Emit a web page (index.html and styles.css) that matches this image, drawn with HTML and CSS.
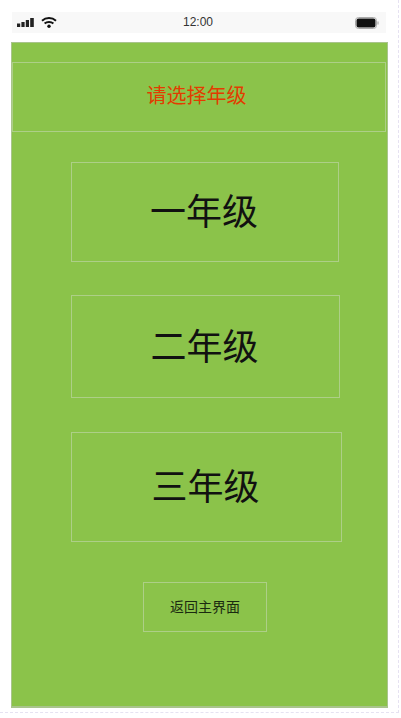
FILE: index.html
```html
<!DOCTYPE html>
<html lang="zh-CN">
<head>
    <meta charset="UTF-8">
    <meta name="viewport" content="width=device-width, initial-scale=1.0">
    <title>请选择年级</title>
    <link rel="stylesheet" href="styles.css">
</head>
<body>
    <div class="canvas">
        <div class="phone">
            <div class="status-bar">
                <div class="status-left">
                    <svg class="signal" width="18" height="10" viewBox="0 0 18 10">
                        <rect x="0" y="5.5" width="3.2" height="3.5" fill="#222"/>
                        <rect x="4.4" y="4" width="3.2" height="5" fill="#222"/>
                        <rect x="8.8" y="2" width="3.2" height="7" fill="#222"/>
                        <rect x="13.2" y="0" width="3.6" height="9" fill="#222"/>
                    </svg>
                    <svg class="wifi" width="16" height="11" viewBox="0 0 16 11">
                        <path d="M1 3.8C5 0.2 11 0.2 15 3.8" fill="none" stroke="#111" stroke-width="2"/>
                        <path d="M3.6 6.4C6 4.4 10 4.4 12.4 6.4" fill="none" stroke="#111" stroke-width="2"/>
                        <circle cx="8" cy="9.2" r="1.7" fill="#111"/>
                    </svg>
                </div>
                <div class="status-time">12:00</div>
                <svg class="battery" width="24" height="12" viewBox="0 0 24 12">
                    <rect x="0.5" y="0.5" width="21" height="11" rx="3" fill="#fff" stroke="#aaa"/>
                    <rect x="1.5" y="1.5" width="19" height="9" rx="2" fill="#111"/>
                    <rect x="22.5" y="4.5" width="1" height="3" fill="#999"/>
                </svg>
            </div>
            <div class="screen">
                <div class="header-box">请选择年级</div>
                <a class="grade-box grade-one">一年级</a>
                <a class="grade-box grade-two">二年级</a>
                <a class="grade-box grade-three">三年级</a>
                <a class="back-button">返回主界面</a>
            </div>
        </div>
    </div>
</body>
</html>
```

FILE: styles.css
```css
html, body {
    margin: 0;
    padding: 0;
    background-color: #ffffff;
    overflow: hidden;
}

body {
    font-family: "Liberation Sans", "Noto Sans CJK SC", sans-serif;
}

.canvas {
    width: 399px;
    height: 713px;
    padding: 12px 0 0 11px;
    box-sizing: border-box;
    border-right: 1px dashed #e6e2f2;
    border-bottom: 1px dashed #e6e2f2;
}

.phone {
    width: 377px;
    display: flex;
    flex-direction: column;
}

.status-bar {
    height: 21px;
    margin: 0 2px 9px 1px;
    padding: 0 7px 0 5px;
    background-color: #f8f8f8;
    display: flex;
    align-items: center;
    justify-content: space-between;
    position: relative;
}

.status-left {
    display: flex;
    align-items: center;
    gap: 6px;
}

.status-time {
    position: absolute;
    left: 171px;
    top: 3px;
    font-size: 12px;
    color: #333333;
}

.screen {
    height: 666px;
    box-sizing: border-box;
    background-color: #8bc34a;
    border: 1px solid #a9c48c;
    border-bottom-width: 2px;
    display: flex;
    flex-direction: column;
    align-items: flex-start;
}

.header-box {
    width: 374px;
    height: 70px;
    margin-top: 19px;
    padding: 0 5px 6px 0;
    box-sizing: border-box;
    border: 1px solid #adcf87;
    display: flex;
    align-items: center;
    justify-content: center;
    font-size: 20px;
    color: #e23c00;
}

.grade-box {
    margin-left: 59px;
    padding: 0 2px 6px 0;
    box-sizing: border-box;
    border: 1px solid #adcf87;
    display: flex;
    align-items: center;
    justify-content: center;
    font-size: 36px;
    color: #111111;
}

.grade-one {
    width: 268px;
    height: 100px;
    margin-top: 30px;
}

.grade-two {
    width: 269px;
    height: 103px;
    margin-top: 33px;
}

.grade-three {
    width: 271px;
    height: 110px;
    margin-top: 34px;
}

.back-button {
    width: 124px;
    height: 50px;
    margin-top: 40px;
    margin-left: 131px;
    padding-bottom: 2px;
    box-sizing: border-box;
    border: 1px solid #adcf87;
    display: flex;
    align-items: center;
    justify-content: center;
    font-size: 14px;
    color: #1a2a10;
}
```
